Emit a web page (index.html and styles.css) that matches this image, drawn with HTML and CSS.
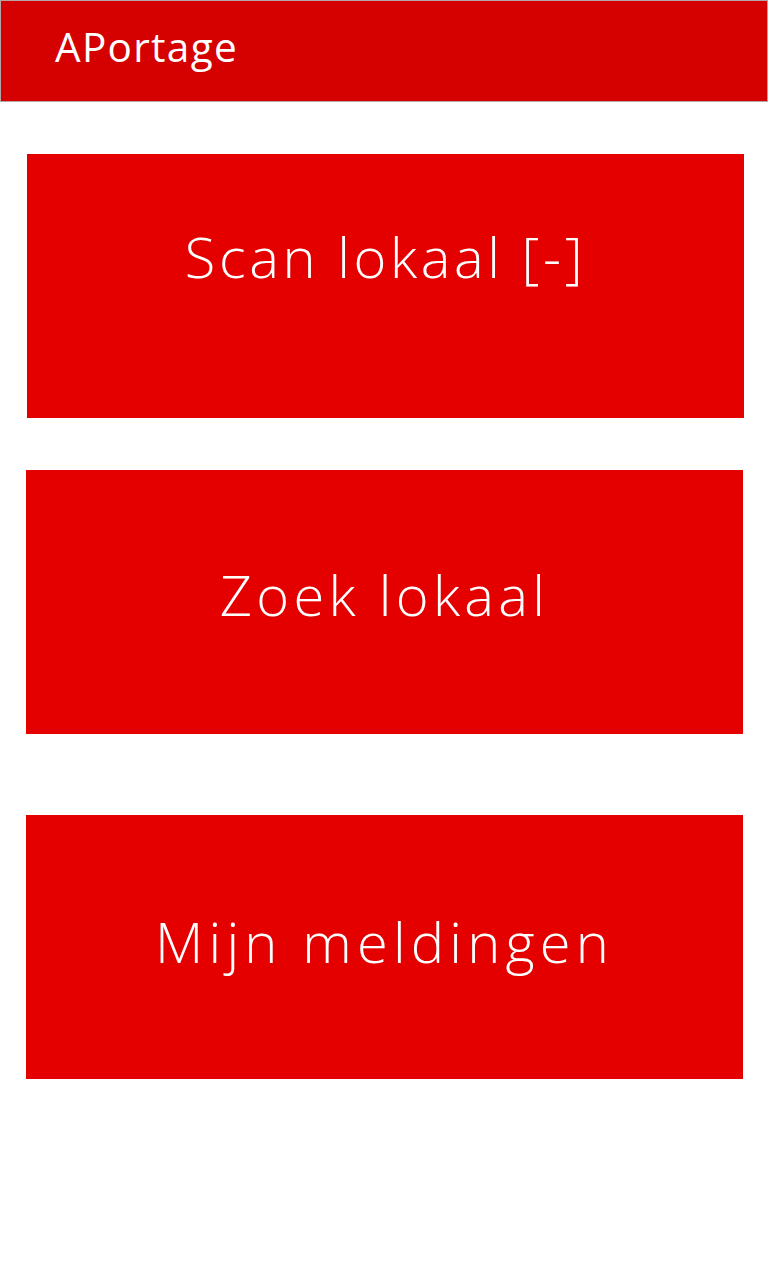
FILE: index.html
```html
<!DOCTYPE html>
<html lang="nl">
<head>
<meta charset="utf-8">
<title>APortage</title>
<link rel="stylesheet" href="styles.css">
</head>
<body>
<header class="topbar">
  <h1 class="title">APortage</h1>
</header>
<main class="menu">
  <a class="tile tile-scan" href="#">Scan lokaal [-]</a>
  <a class="tile tile-zoek" href="#">Zoek lokaal</a>
  <a class="tile tile-mijn" href="#">Mijn meldingen</a>
</main>
</body>
</html>
```
FILE: styles.css
```css
html, body {
  margin: 0;
  padding: 0;
  background: #ffffff;
}
body {
  font-family: "Open Sans", "Liberation Sans", sans-serif;
  width: 768px;
}
.topbar {
  box-sizing: border-box;
  height: 102px;
  background: #d50000;
  border: 1px solid #b5a5a5;
  display: flex;
  align-items: center;
  padding-left: 54px;
}
.title {
  margin: 0;
  color: #ffffff;
  font-size: 40.5px;
  font-weight: 400;
  letter-spacing: 1.3px;
  line-height: 1;
  padding-bottom: 7.5px;
}
.menu {
  display: flex;
  flex-direction: column;
}
.tile {
  box-sizing: border-box;
  display: flex;
  align-items: center;
  justify-content: center;
  height: 264px;
  width: 717px;
  margin-left: 26px;
  background: #e50000;
  color: #ffffff;
  text-decoration: none;
  font-size: 56px;
  font-weight: 300;
  letter-spacing: 4.2px;
  line-height: 1;
}
.tile-scan {
  margin-top: 52px;
  margin-left: 27px;
  padding-bottom: 61px;
  letter-spacing: 3.6px;
}
.tile-zoek {
  margin-top: 52px;
  padding-bottom: 17px;
  letter-spacing: 4.3px;
}
.tile-mijn {
  margin-top: 81px;
  padding-bottom: 13px;
  letter-spacing: 5.2px;
}
```
